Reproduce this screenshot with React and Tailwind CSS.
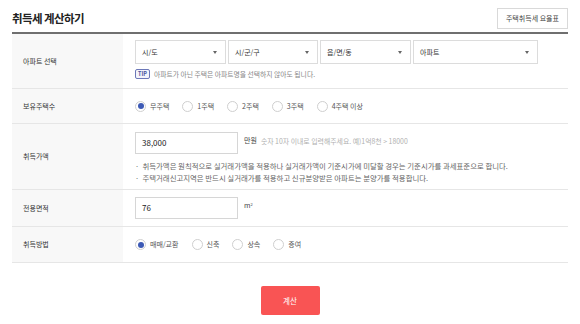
import React from 'react';

const font = { fontFamily: '"Noto Sans CJK KR", "Noto Sans", sans-serif' };

function Select({ label, width }) {
  return (
    <div className={`relative flex items-center h-[24px] border border-[#dcdcdc] bg-white pl-[6px] text-[7px] text-[#333] ${width}`}>
      {label}
      <span className="absolute right-[8px] top-[10px] w-0 h-0 border-l-[2.5px] border-r-[2.5px] border-t-[3px] border-l-transparent border-r-transparent border-t-[#666]" />
    </div>
  );
}

function Radio({ label, checked }) {
  return (
    <label className="flex items-center gap-[4px] mr-[13px] text-[7px] text-[#555]">
      <span className="flex items-center justify-center w-[11px] h-[11px] rounded-full border border-[#cfcfcf] bg-white">
        {checked && <span className="w-[6px] h-[6px] rounded-full bg-[#3d5ab5]" />}
      </span>
      {label}
    </label>
  );
}

function Row({ label, height, children, align = 'justify-center' }) {
  return (
    <div className={`flex border-b border-[#e6e6e6] ${height}`}>
      <div className="w-[111px] shrink-0 bg-[#f8f8f8] flex items-center pl-[11px] text-[7px] text-[#333]">
        {label}
      </div>
      <div className={`flex-1 flex flex-col pl-[12px] ${align}`}>{children}</div>
    </div>
  );
}

export default function App() {
  return (
    <div className="w-[580px] h-[324px] bg-white px-[12px] pt-[8px]" style={font}>
      {/* Header */}
      <div className="flex items-center justify-between h-[21px] mb-[3px]">
        <h1 className="text-[11.5px] font-bold text-[#222] tracking-[-0.6px]">취득세 계산하기</h1>
        <button className="h-[21px] px-[8px] border border-[#d9d9d9] bg-white text-[7px] text-[#444]">
          주택취득세 요율표
        </button>
      </div>

      {/* Table */}
      <div className="border-t-2 border-[#6f6f6f]">
        <Row label="아파트 선택" height="h-[55px]" align="justify-start pt-[6px]">
          <div className="flex gap-[2px]">
            <Select label="시/도" width="w-[91px]" />
            <Select label="시/군/구" width="w-[90px]" />
            <Select label="읍/면/동" width="w-[91px]" />
            <Select label="아파트" width="w-[125px]" />
          </div>
          <div className="flex items-center gap-[4px] mt-[5px]">
            <span className="flex items-center justify-center h-[10px] px-[2px] rounded-[2px] border border-[#6c78b8] bg-[#f3f4fb] text-[5.5px] font-bold text-[#4a56a0]">TIP</span>
            <span className="text-[6.8px] text-[#888]">아파트가 아닌 주택은 아파트명을 선택하지 않아도 됩니다.</span>
          </div>
        </Row>

        <Row label="보유주택수" height="h-[35px]">
          <div className="flex items-center">
            <Radio label="무주택" checked />
            <Radio label="1주택" />
            <Radio label="2주택" />
            <Radio label="3주택" />
            <Radio label="4주택 이상" />
          </div>
        </Row>

        <Row label="취득가액" height="h-[66px]" align="justify-start pt-[8px]">
          <div className="flex items-start">
            <div className="flex items-center w-[103px] h-[22px] border border-[#d6d6d6] pl-[6px] text-[8px] text-[#222]">38,000</div>
            <span className="ml-[6px] mt-[3px] text-[7px] text-[#444]">만원</span>
            <span className="ml-[4px] mt-[3.5px] text-[6.9px] text-[#b0b0b0]">숫자 10자 이내로 입력해주세요. 예)1억8천 &gt; 18000</span>
          </div>
          <ul className="mt-[6px] text-[7.4px] leading-[12px] text-[#666]">
            <li>· &nbsp;취득가액은 원칙적으로 실거래가액을 적용하나 실거래가액이 기준시가에 미달할 경우는 기준시가를 과세표준으로 합니다.</li>
            <li>· &nbsp;주택거래신고지역은 반드시 실거래가를 적용하고 신규분양받은 아파트는 분양가를 적용합니다.</li>
          </ul>
        </Row>

        <Row label="전용면적" height="h-[37px]">
          <div className="flex items-start">
            <div className="flex items-center w-[103px] h-[22px] border border-[#d6d6d6] pl-[6px] text-[8px] text-[#222]">76</div>
            <span className="ml-[6px] mt-[3px] text-[7px] text-[#444]">
              m<sup className="text-[4px]">2</sup>
            </span>
          </div>
        </Row>

        <Row label="취득방법" height="h-[36px]">
          <div className="flex items-center">
            <Radio label="매매/교환" checked />
            <Radio label="신축" />
            <Radio label="상속" />
            <Radio label="증여" />
          </div>
        </Row>
      </div>

      {/* Submit */}
      <div className="flex justify-center mt-[23px]">
        <button className="w-[59px] h-[29px] rounded-[2px] bg-[#f95454] text-[7.5px] text-white">계산</button>
      </div>
    </div>
  );
}
